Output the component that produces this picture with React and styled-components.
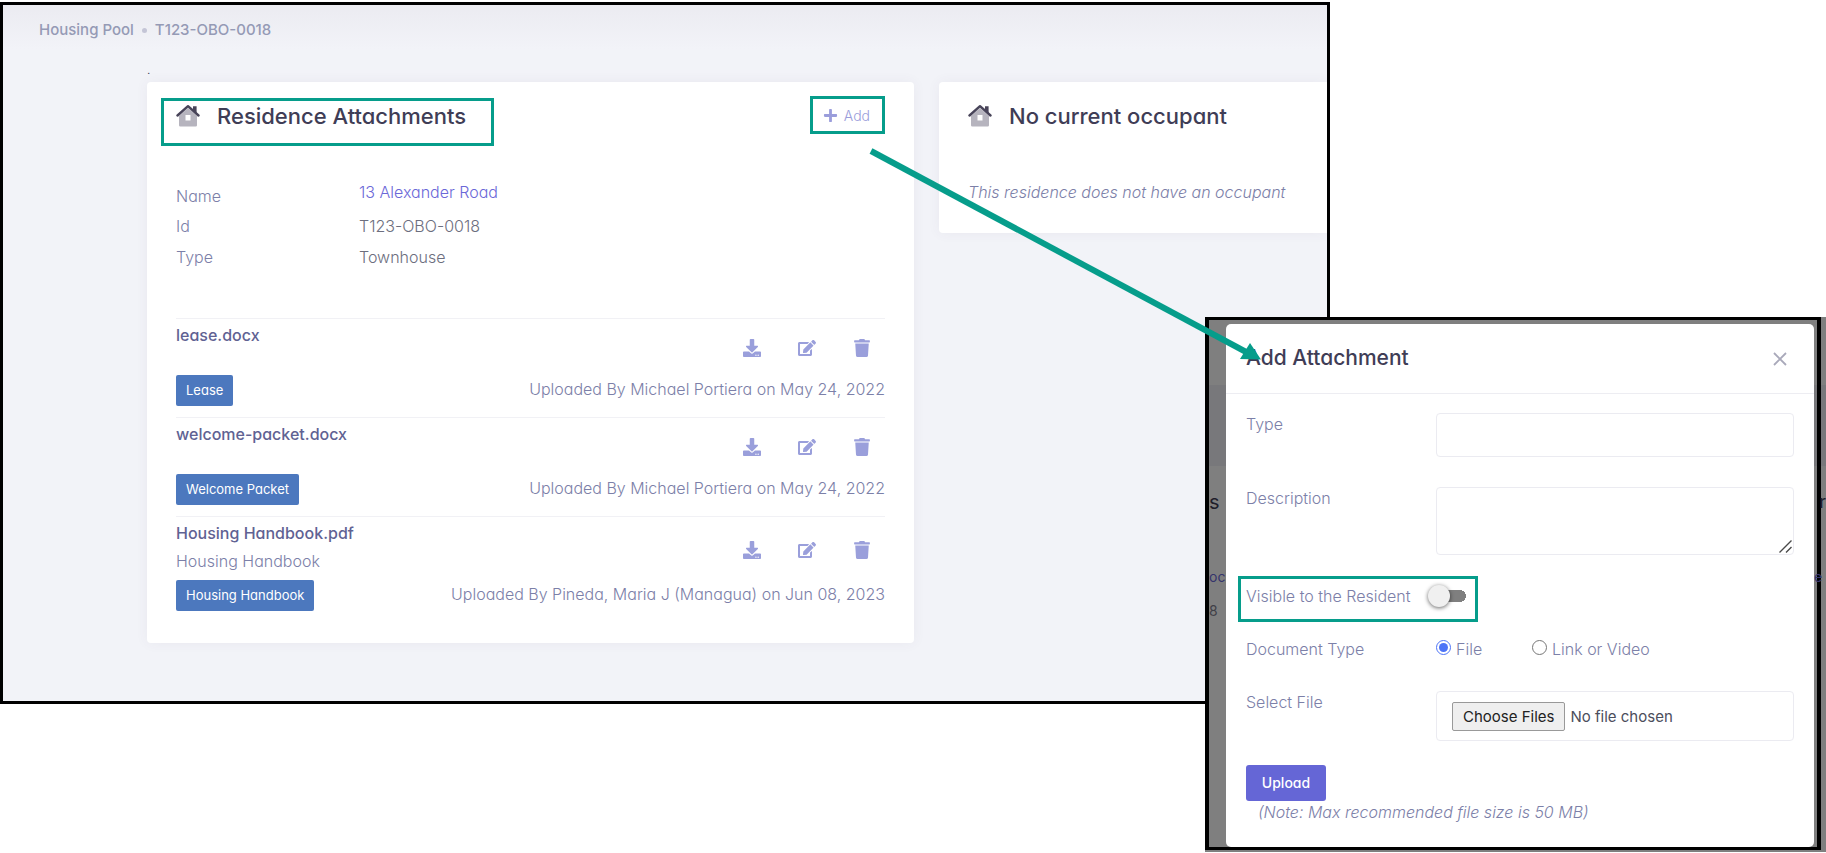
import React from "react";
import styled, { createGlobalStyle } from "styled-components";
import { FaDownload, FaEdit, FaTrash, FaPlus } from "react-icons/fa";

const teal = "#069d8b";
const ink = "#3f3d56";
const muted = "#7c80a8";

const GlobalStyle = createGlobalStyle`
  *, *::before, *::after { box-sizing: border-box; }
  body { margin: 0; background: #fff; }
  body, button, input, textarea {
    font-family: Inter, "Liberation Sans", sans-serif;
    font-feature-settings: "cv11";
  }
  body { font-size: 16px; line-height: 24px; font-weight: 300; color: ${muted}; }
  h1, h2, p, ul, dl, dd { margin: 0; padding: 0; }
`;

const Page = styled.div`
  position: relative;
  display: grid;
  grid-template-columns: minmax(0, 1205fr) minmax(0, 125fr) minmax(0, 496fr);
  align-items: start;
`;

const Screen = styled.main`
  grid-column: 1 / 3;
  grid-row: 1;
  margin-top: 2px;
  padding-bottom: 58px;
  border: 3px solid #000;
  overflow: hidden;
  background: linear-gradient(#ebebf1, #f2f3f8 44px);
`;

const Breadcrumb = styled.nav`
  display: flex;
  align-items: center;
  gap: 8px;
  padding: 13px 36px 0;
  font-size: 15px;
  font-weight: 500;
  a { color: #959ab5; text-decoration: none; }
`;

const Dot = styled.span`
  width: 5px;
  height: 5px;
  border-radius: 50%;
  background: #c4c5d6;
`;

const Marker = styled.p`
  padding: 16px 144px 0;
  font-size: 12px;
  line-height: 24px;
  color: ${ink};
`;

const Columns = styled.div`
  display: grid;
  grid-template-columns: minmax(0, 767fr) minmax(0, 388fr);
  align-items: start;
  gap: 25px;
  padding-left: 144px;
`;

const Card = styled.section`
  background: #fff;
  border-radius: ${(p) => (p.$cut ? "4px 0 0 4px" : "4px")};
  box-shadow: 0 0 13px rgba(82, 63, 105, 0.06);
`;

const CardHeader = styled.header`
  display: flex;
  justify-content: space-between;
  align-items: flex-start;
  padding: 14px 29px 0 14px;
`;

const Heading = styled.div`
  display: flex;
  align-items: flex-start;
  gap: 17px;
  height: 48px;
  margin-top: 2px;
  padding: 0 25px 0 12px;
  border: 3px solid ${(p) => (p.$marked ? teal : "transparent")};
  h2 { font-size: 22px; line-height: 30px; font-weight: 500; color: ${ink}; white-space: nowrap; }
  svg { flex: none; margin-top: 3px; }
`;

const AddButton = styled.button`
  display: flex;
  align-items: center;
  gap: 6px;
  height: 38px;
  padding: 1px 12px 0 10px;
  border: 3px solid ${teal};
  background: #fff;
  color: #9a9ddb;
  font-size: 14px;
  font-weight: 300;
`;

const CardBody = styled.div`
  padding: 34px 29px ${(p) => (p.$short ? "29px" : "21px")};
`;

const Details = styled.dl`
  display: grid;
  grid-template-columns: 183px 1fr;
  grid-template-rows: 34px 31px 31px;
  margin-bottom: 42px;
  dt:first-of-type { padding-top: 4px; }
  dd { color: #6c6e7e; }
  a { color: #6b68d8; text-decoration: none; }
`;

const Files = styled.ul`
  list-style: none;
`;

const FileItem = styled.li`
  padding: 2px 0 11px;
  border-top: 1px solid #f1f1f5;
`;

const FileRow = styled.div`
  display: flex;
  justify-content: space-between;
  align-items: ${(p) => (p.$top ? "flex-start" : "center")};
`;

const FileName = styled.div`
  line-height: 28px;
  font-weight: 500;
  color: #5f6293;
`;

const FileText = styled.div`
  min-height: 21px;
  margin-bottom: 5px;
  line-height: ${(p) => (p.$empty ? "21px" : "28px")};
`;

const Uploader = styled.span`
  line-height: 28px;
`;

const Actions = styled.div`
  display: flex;
  gap: 31px;
  padding-right: 11px;
`;

const IconButton = styled.button`
  display: grid;
  place-items: center;
  width: 24px;
  height: 24px;
  padding: 0;
  border: 0;
  background: none;
  color: #9a9fdb;
  font-size: 18px;
`;

const Badge = styled.span`
  height: 31px;
  padding: 0 10px;
  border-radius: 2px;
  background: #4c78be;
  color: #fff;
  font-size: 13px;
  line-height: 31px;
  font-weight: 400;
`;

const Note = styled.p`
  font-style: italic;
  padding: ${(p) => (p.$indent ? "1px 0 0 12px" : "0")};
  line-height: ${(p) => (p.$indent ? "20px" : "24px")};
  white-space: nowrap;
`;

const Backdrop = styled.aside`
  position: relative;
  grid-column: 2 / 4;
  grid-row: 1;
  margin-top: 317px;
  padding: 0 5px 2px 0;
  background: linear-gradient(#7f7f7f 68px, #78787b 68px 149px, #7f7f7f 149px);
`;

const Frame = styled.div`
  padding: 4px 3px 0 17px;
  border: solid #000;
  border-width: 3px 4px;
`;

const Behind = styled.div`
  position: absolute;
  top: 0;
  bottom: 0;
  ${(p) => (p.$right ? "right: 0; width: 12px;" : "left: 4px; width: 17px;")}
  padding-top: 173px;
  pointer-events: none;
  p { white-space: nowrap; font-weight: 400; font-size: 14px; color: #3f4048; }
  p:nth-child(1) { font-size: ${(p) => (p.$right ? "18px" : "20px")}; line-height: 24px; color: #1f1e2b; text-align: ${(p) => (p.$right ? "right" : "left")}; }
  p:nth-child(2) { margin-top: 51px; color: #35346c; }
  p:nth-child(3) { margin-top: 10px; }
`;

const Dialog = styled.div`
  background: #fff;
  border-radius: 5px;
`;

const DialogHeader = styled.header`
  display: flex;
  justify-content: space-between;
  align-items: center;
  height: 70px;
  padding: 0 24px 0 20px;
  border-bottom: 1px solid #ededf2;
  h1 { font-size: 21px; line-height: 28px; font-weight: 500; color: ${ink}; padding-bottom: 2px; }
`;

const CloseButton = styled.button`
  display: grid;
  place-items: center;
  width: 20px;
  height: 20px;
  padding: 0;
  border: 0;
  background: none;
`;

const Form = styled.form`
  padding: 19px 20px 25px;
`;

const Field = styled.div`
  display: grid;
  grid-template-columns: 190px minmax(0, 1fr);
  align-items: start;
  margin-bottom: ${(p) => p.$gap}px;
  > label { line-height: 22px; }
`;

const TextInput = styled.input`
  width: 100%;
  height: 44px;
  border: 1px solid #ebebf1;
  border-radius: 4px;
`;

const TextBox = styled.div`
  position: relative;
  svg { position: absolute; right: 2px; bottom: 2px; pointer-events: none; }
`;

const TextArea = styled.textarea`
  display: block;
  width: 100%;
  height: 68px;
  border: 1px solid #ebebf1;
  border-radius: 4px;
  resize: none;
`;

const ToggleField = styled.label`
  display: flex;
  align-items: center;
  justify-content: space-between;
  width: 240px;
  height: 46px;
  margin: 0 0 15px -8px;
  padding: 0 9px 6px 5px;
  border: 3px solid ${teal};
`;

const Toggle = styled.input`
  appearance: none;
  display: flex;
  align-items: center;
  width: 38px;
  height: 22px;
  margin: 0;
  background: linear-gradient(#7f7f7f, #7f7f7f) 10px 5px / 22px 12px no-repeat,
    radial-gradient(circle at 32px 11px, #7f7f7f 6px, transparent 6px);
  &::before {
    content: "";
    width: 22px;
    height: 22px;
    border-radius: 50%;
    background: #f0f0f0;
    box-shadow: 0 1px 4px rgba(0, 0, 0, 0.6);
  }
`;

const Options = styled.div`
  display: grid;
  grid-template-columns: 96px 1fr;
`;

const Option = styled.label`
  display: flex;
  align-items: center;
  gap: 5px;
  white-space: nowrap;
  input { width: 15px; height: 15px; margin: 0 0 4px; accent-color: #4d74f7; }
`;

const FileInput = styled.input`
  width: 100%;
  height: 50px;
  padding: 10px 15px;
  border: 1px solid #ebebf1;
  border-radius: 4px;
  font-size: 15px;
  line-height: 28px;
  font-weight: 400;
  color: #4c4e5c;
  &::file-selector-button {
    height: 29px;
    margin: 0 5px 0 0;
    padding: 0 10px;
    border: 1px solid #999;
    border-radius: 2px;
    background: #efefef;
    color: #222;
    font-family: inherit;
    font-size: 15px;
    font-weight: 400;
  }
`;

const UploadButton = styled.button`
  display: block;
  width: 80px;
  height: 36px;
  padding: 0 0 2px;
  border: 0;
  border-radius: 3px;
  background: #6566d6;
  color: #fff;
  font-size: 14px;
  font-weight: 500;
`;

const Arrow = styled.svg`
  position: absolute;
  top: 147px;
  left: calc(100% * 868 / 1826);
  width: 394px;
  height: 217px;
  pointer-events: none;
`;

function House() {
  return (
    <svg width="24" height="23" viewBox="0 0 24 23" aria-hidden="true">
      <path d="M12 4 21 12v9.200a1.300 1.300 0 0 1-1.300 1.300H4.300A1.300 1.300 0 0 1 3 21.200V12z M9.500 11v5.500h5v-5.500z" fill="#b6b4be" fillRule="evenodd" />
      <path d="M17 2.200h3.600v7.300l-3.600-3z" fill="#484459" />
      <path d="M1.500 11.500 12 2.200l10.500 9.300" fill="none" stroke="#484459" strokeWidth="2.400" strokeLinecap="round" strokeLinejoin="round" />
    </svg>
  );
}

const files = [
  { name: "lease.docx", tag: "Lease", by: "Uploaded By Michael Portiera on May 24, 2022" },
  { name: "welcome-packet.docx", tag: "Welcome Packet", by: "Uploaded By Michael Portiera on May 24, 2022" },
  { name: "Housing Handbook.pdf", text: "Housing Handbook", tag: "Housing Handbook", by: "Uploaded By Pineda, Maria J (Managua) on Jun 08, 2023" },
];

function Attachment({ file }) {
  return (
    <FileItem>
      <FileRow>
        <div>
          <FileName>{file.name}</FileName>
          <FileText $empty={!file.text}>{file.text}</FileText>
        </div>
        <Actions>
          <IconButton aria-label="Download"><FaDownload /></IconButton>
          <IconButton aria-label="Edit"><FaEdit /></IconButton>
          <IconButton aria-label="Delete"><FaTrash /></IconButton>
        </Actions>
      </FileRow>
      <FileRow $top>
        <Badge>{file.tag}</Badge>
        <Uploader>{file.by}</Uploader>
      </FileRow>
    </FileItem>
  );
}

export default function App() {
  return (
    <>
      <GlobalStyle />
      <Page>
        <Screen>
          <Breadcrumb>
            <a href="#pool">Housing Pool</a>
            <Dot />
            <a href="#residence">T123-OBO-0018</a>
          </Breadcrumb>
          <Marker>.</Marker>
          <Columns>
            <Card>
              <CardHeader>
                <Heading $marked>
                  <House />
                  <h2>Residence Attachments</h2>
                </Heading>
                <AddButton><FaPlus size={15} />Add</AddButton>
              </CardHeader>
              <CardBody>
                <Details>
                  <dt>Name</dt>
                  <dd><a href="#address">13 Alexander Road</a></dd>
                  <dt>Id</dt>
                  <dd>T123-OBO-0018</dd>
                  <dt>Type</dt>
                  <dd>Townhouse</dd>
                </Details>
                <Files>
                  {files.map((f) => <Attachment key={f.name} file={f} />)}
                </Files>
              </CardBody>
            </Card>
            <Card $cut>
              <CardHeader>
                <Heading>
                  <House />
                  <h2>No current occupant</h2>
                </Heading>
              </CardHeader>
              <CardBody $short>
                <Note>This residence does not have an occupant</Note>
              </CardBody>
            </Card>
          </Columns>
        </Screen>

        <Backdrop>
          <Frame>
            <Dialog role="dialog" aria-labelledby="dialog-title">
              <DialogHeader>
                <h1 id="dialog-title">Add Attachment</h1>
                <CloseButton aria-label="Close">
                  <svg width="14" height="14" viewBox="0 0 14 14" stroke="#a9a9ba" strokeWidth="1.800">
                    <path d="M1 1l12 12M13 1L1 13" />
                  </svg>
                </CloseButton>
              </DialogHeader>
              <Form onSubmit={(e) => e.preventDefault()}>
                <Field $gap={30}>
                  <label htmlFor="type">Type</label>
                  <TextInput id="type" />
                </Field>
                <Field $gap={21}>
                  <label htmlFor="description">Description</label>
                  <TextBox>
                    <TextArea id="description" />
                    <svg width="13" height="13" viewBox="0 0 13 13" stroke="#4a4a4a" strokeWidth="1.400" aria-hidden="true">
                      <path d="M.5 12.500 12.500.500M7 12.500l5.500-5.500" />
                    </svg>
                  </TextBox>
                </Field>
                <ToggleField>
                  Visible to the Resident
                  <Toggle type="checkbox" role="switch" />
                </ToggleField>
                <Field $gap={30}>
                  <span>Document Type</span>
                  <Options>
                    <Option><input type="radio" name="kind" defaultChecked />File</Option>
                    <Option><input type="radio" name="kind" />Link or Video</Option>
                  </Options>
                </Field>
                <Field $gap={24}>
                  <label htmlFor="file">Select File</label>
                  <FileInput id="file" type="file" multiple />
                </Field>
                <UploadButton>Upload</UploadButton>
                <Note $indent>(Note: Max recommended file size is 50 MB)</Note>
              </Form>
            </Dialog>
          </Frame>
          <Behind aria-hidden="true">
            <p>s</p>
            <p>oc</p>
            <p>8</p>
          </Behind>
          <Behind $right aria-hidden="true">
            <p>r</p>
            <p>e</p>
          </Behind>
        </Backdrop>

        <Arrow viewBox="0 0 394 217" aria-hidden="true">
          <path d="M3 4 380 206" stroke={teal} strokeWidth="6" />
          <path d="M382 196 393 212.500 372 212z" fill={teal} />
        </Arrow>
      </Page>
    </>
  );
}
